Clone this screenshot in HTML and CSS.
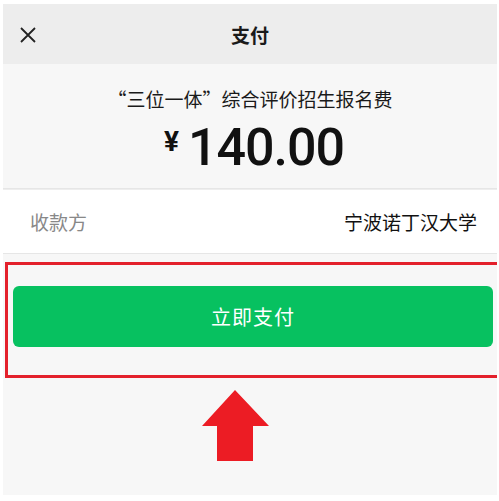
FILE: index.html
```html
<!DOCTYPE html>
<html lang="zh-CN">
<head>
    <meta charset="UTF-8">
    <meta name="viewport" content="width=device-width, initial-scale=1.0">
    <title>支付</title>
    <link rel="stylesheet" href="styles.css">
</head>
<body>
    <div class="screen">
        <div class="topbar">
            <svg class="close" width="18" height="18" viewBox="0 0 18 18">
                <path d="M2 2 L16 16 M16 2 L2 16" stroke="#222" stroke-width="1.8" fill="none"/>
            </svg>
            <div class="topbar-title">支付</div>
        </div>
        <div class="summary">
            <div class="goods">“三位一体”综合评价招生报名费</div>
            <div class="amount"><span class="yen">¥</span>140.00</div>
        </div>
        <div class="row">
            <span class="row-label">收款方</span>
            <span class="row-value">宁波诺丁汉大学</span>
        </div>
        <div class="pay-area">
            <div class="highlight">
                <button class="pay-btn">立即支付</button>
            </div>
            <svg class="arrow" width="67" height="71" viewBox="0 0 67 71">
                <polygon points="33,0 67,36 51,36 51,71 15,71 15,36 0,36" fill="#ec1c24"/>
            </svg>
        </div>
    </div>
</body>
</html>
```

FILE: styles.css
```css
body {
    margin: 0;
    background-color: #fff;
    font-family: "Noto Sans CJK SC", "Noto Sans", sans-serif;
}
.screen {
    margin: 4px 2px 0 3px;
    height: 491px;
    background-color: #f7f7f7;
    overflow: hidden;
}
.topbar {
    position: relative;
    height: 60px;
    background-color: #ededed;
    display: flex;
    align-items: center;
    justify-content: center;
}
.close {
    position: absolute;
    left: 16px;
    top: 22px;
}
.topbar-title {
    font-size: 19px;
    font-weight: bold;
    color: #1a1a1a;
}
.summary {
    height: 124px;
    border-bottom: 1px solid #e6e6e6;
    display: flex;
    flex-direction: column;
    align-items: center;
}
.goods {
    margin-top: 22px;
    font-size: 19px;
    line-height: 26px;
    color: #1a1a1a;
}
.amount {
    font-family: Roboto, "Liberation Sans", sans-serif;
    font-size: 52px;
    line-height: 60px;
    font-weight: 500;
    letter-spacing: -1px;
    color: #111;
    padding-left: 8px;
}
.yen {
    font-size: 28px;
    font-weight: bold;
    vertical-align: 14px;
    margin-right: 10px;
}
.row {
    height: 63px;
    background-color: #fff;
    border-top: 1px solid #eee;
    border-bottom: 1px solid #e6e6e6;
    display: flex;
    align-items: center;
    justify-content: space-between;
    padding: 0 20px 0 27px;
    font-size: 19px;
}
.row-label {
    color: #888;
}
.row-value {
    color: #111;
}
.pay-area {
    padding-top: 8px;
}
.highlight {
    margin-left: 2px;
    margin-right: -4px;
    border: 3px solid #e3202b;
    height: 89px;
    padding: 21px 5px 0 5px;
}
.pay-btn {
    display: block;
    width: 480px;
    height: 61px;
    border: none;
    border-radius: 6px;
    background-color: #07c160;
    color: #fff;
    font-family: "Noto Sans CJK SC", sans-serif;
    font-size: 20px;
    letter-spacing: 1px;
}
.arrow {
    display: block;
    margin: 12px 0 0 199px;
}
```
